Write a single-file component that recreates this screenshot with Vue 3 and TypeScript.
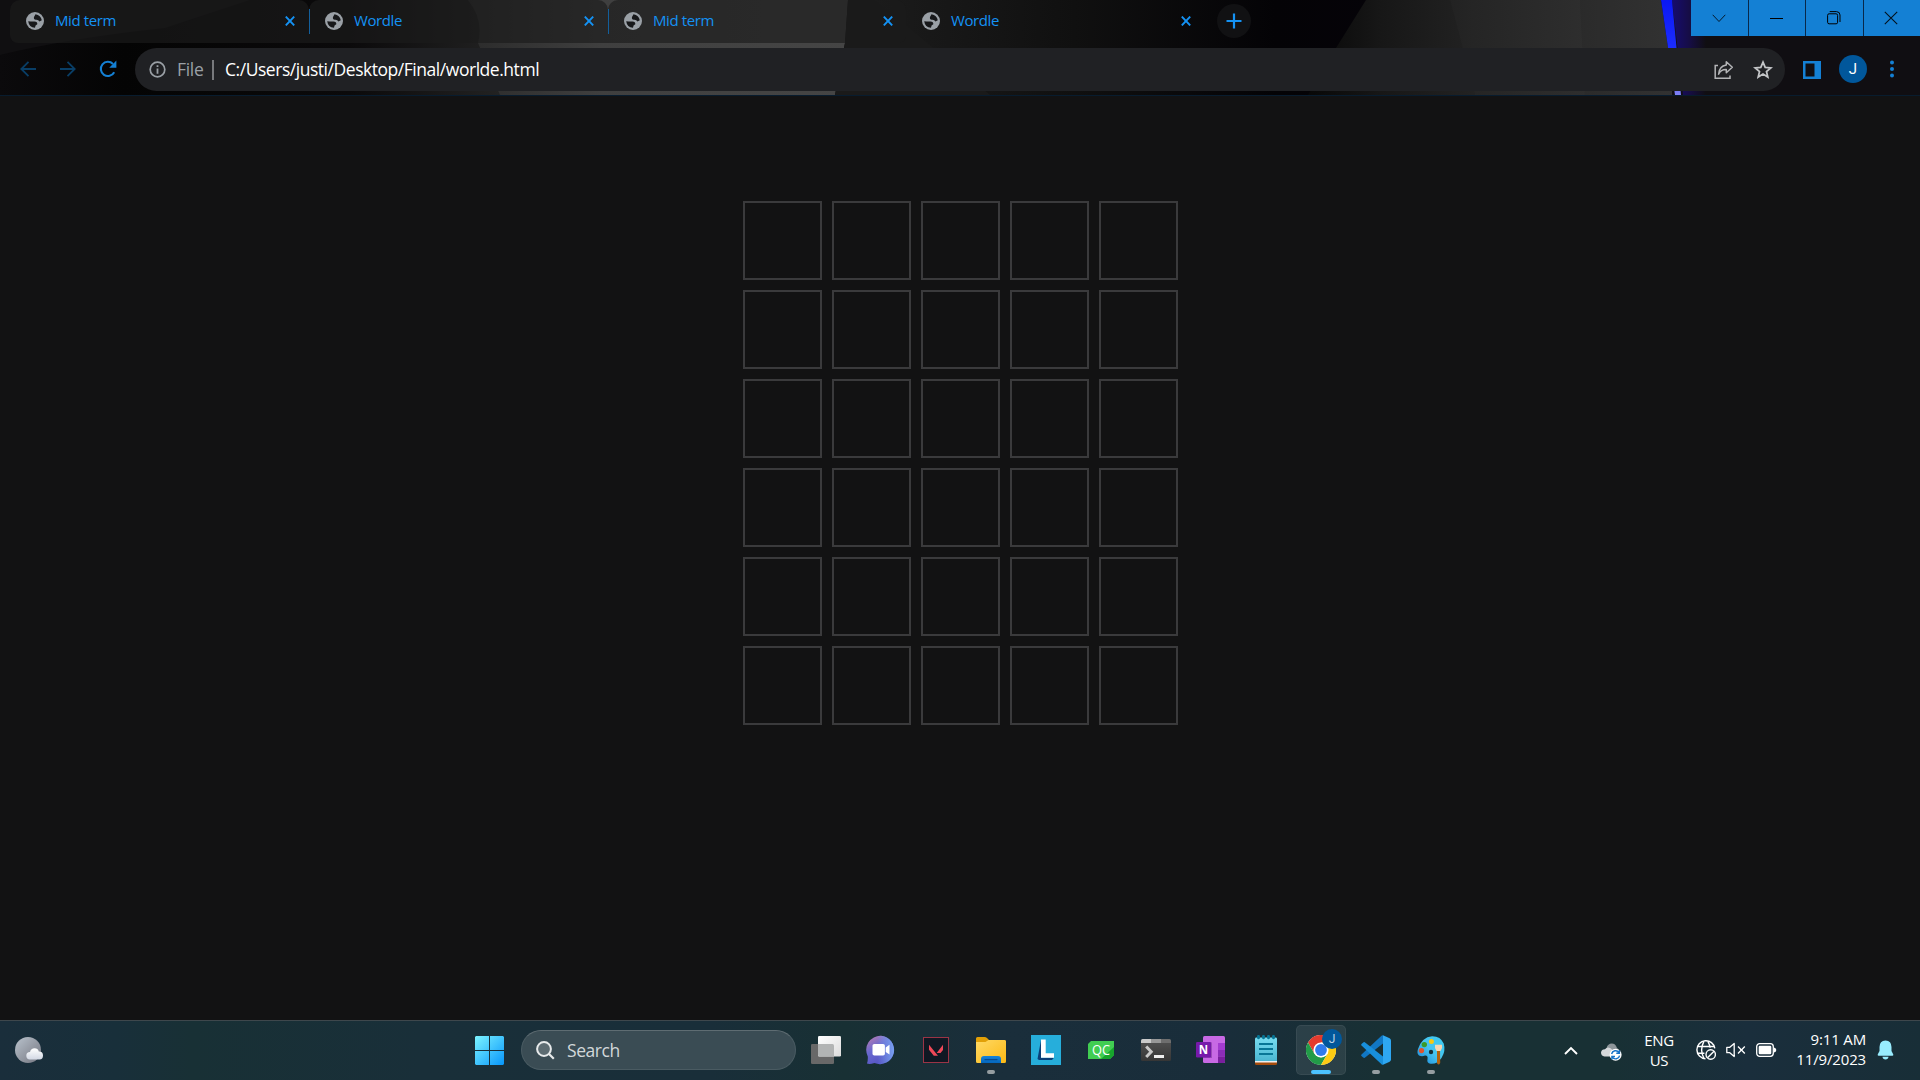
<script setup lang="ts">
interface Tab {
  title: string
  width: number
  active: boolean
  divider: boolean
}

const tabs: Tab[] = [
  { title: 'Mid term', width: 299, active: false, divider: true },
  { title: 'Wordle', width: 299, active: false, divider: true },
  { title: 'Mid term', width: 298, active: false, divider: false },
  { title: 'Wordle', width: 299, active: true, divider: false },
]

const rows = 6
const cols = 5
</script>

<template>
  <div class="screen">
    <header class="browser">
      <svg class="theme" width="1920" height="95" viewBox="0 0 1920 95">
        <defs>
          <linearGradient id="gl" x1="0" x2="1"><stop offset="0" stop-color="#0b0a0c" /><stop offset=".25" stop-color="#040404" /><stop offset=".7" stop-color="#0b0a0b" /><stop offset="1" stop-color="#222" /></linearGradient>
          <linearGradient id="gm" x1="0" x2="1"><stop offset="0" stop-color="#2b2b2b" /><stop offset=".35" stop-color="#3f3f3f" /><stop offset="1" stop-color="#454545" /></linearGradient>
          <linearGradient id="gd" x1="0" x2="1"><stop offset="0" stop-color="#1b1b1b" /><stop offset=".4" stop-color="#101010" /><stop offset=".8" stop-color="#040306" /><stop offset="1" stop-color="#050308" /></linearGradient>
          <linearGradient id="gr" x1="0" x2="1"><stop offset="0" stop-color="#080808" /><stop offset=".2" stop-color="#171717" /><stop offset=".45" stop-color="#222" /><stop offset="1" stop-color="#323232" /></linearGradient>
          <linearGradient id="gb" x1="0" x2="1"><stop offset="0" stop-color="#160c70" /><stop offset=".5" stop-color="#160d46" /><stop offset="1" stop-color="#100e12" /></linearGradient>
          <linearGradient id="gs" x1="0" x2="0" y1="0" y2="1"><stop offset="0" stop-color="#0a18f4" /><stop offset=".5" stop-color="#1c2cff" /><stop offset="1" stop-color="#7f80f4" /></linearGradient>
        </defs>
        <rect width="1920" height="95" fill="#0a090c" />
        <rect width="500" height="95" fill="url(#gl)" />
        <path d="M0 55Q70 38 165 28L250 0H0z" fill="#100f11" />
        <path d="M468 0Q484 20 478 43L500 95H835L845 43L848 0z" fill="url(#gm)" />
        <path d="M848 0L845 43L835 95H1000L880 0z" fill="#1a1a1a" />
        <path d="M875 0L990 95H1375V0z" fill="url(#gd)" />
        <path d="M1366 0L1336 48L1308 95H1675L1661 0z" fill="url(#gr)" />
        <path d="M1450 0L1475 95H1585L1580 0z" fill="#fff" opacity=".015" />
        <rect x="1672" width="248" height="95" fill="#100e12" />
        <path d="M1672 0L1683 95H1706V0z" fill="url(#gb)" />
        <path d="M1661 0H1672L1681 95H1675z" fill="url(#gs)" />
      </svg>

      <div class="tabstrip">
        <div v-for="(tab, i) in tabs" :key="i" class="tab" :class="{ active: tab.active, divider: tab.divider }" :style="{ width: tab.width + 'px' }">
          <svg class="favicon" width="18" height="18" viewBox="0 0 18 18">
            <circle cx="9" cy="9" r="9" fill="#9aa0a6" />
            <path d="M9.5 2.2Q14.8 3 15.8 8.2L13.4 9.4Q12.4 7.4 9.8 7.8Q7.4 7.4 8 5z" fill="#17181a" />
            <path d="M2.2 9.2Q5 9.6 8.5 9.5Q11.6 9.8 11.3 12.3Q9 12.8 9 15.8Q3 15.4 2.2 9.2z" fill="#17181a" />
          </svg>
          <span class="title">{{ tab.title }}</span>
          <svg class="close" width="10" height="10" viewBox="0 0 10 10"><path d="M.8 .6L9.2 9.4M9.2 .6L.8 9.4" stroke="#1492f4" stroke-width="1.9" /></svg>
        </div>
        <div class="newtab">
          <svg width="16" height="16" viewBox="0 0 16 16"><path d="M8 .5V15.5M.5 8H15.5" stroke="#1492f4" stroke-width="2.2" /></svg>
        </div>
      </div>

      <div class="caption">
        <div><svg width="14" height="9" viewBox="0 0 14 9"><path d="M.7 .8L7 7.5L13.3 .8" fill="none" stroke="#06192b" stroke-width="1" /></svg></div>
        <div><svg width="13" height="9" viewBox="0 0 13 9"><path d="M0 4.5H13" stroke="#000" stroke-width="1" /></svg></div>
        <div><svg width="14" height="14" viewBox="0 0 14 14"><rect x=".6" y="2.8" width="10" height="10" rx="1.5" fill="none" stroke="#000" /><path d="M2.7 .6H9.5Q13 .8 13 4V11" fill="none" stroke="#000" /></svg></div>
        <div><svg width="14" height="14" viewBox="0 0 14 14"><path d="M.8 .8L13.2 13.2M13.2 .8L.8 13.2" stroke="#04111d" stroke-width="1.1" /></svg></div>
      </div>

      <div class="toolbar">
        <svg class="nav" width="16" height="16" viewBox="0 0 16 16"><path d="M16 8H1.3M8.5 .8L1.3 8L8.5 15.2" fill="none" stroke="#093e66" stroke-width="1.8" /></svg>
        <svg class="nav fwd" width="16" height="16" viewBox="0 0 16 16"><path d="M0 8H14.7M7.5 .8L14.7 8L7.5 15.2" fill="none" stroke="#093e66" stroke-width="1.8" /></svg>
        <svg class="nav reload" width="18" height="18" viewBox="0 0 18 18"><path d="M15.2 12.2A7.1 7.1 0 1 1 14 3.9" fill="none" stroke="#1480d4" stroke-width="2.1" /><path d="M17.4 .6V7.8H10.2z" fill="#1480d4" /></svg>
        <div class="omnibox">
          <svg class="info" width="17" height="17" viewBox="0 0 17 17"><circle cx="8.5" cy="8.5" r="7.3" fill="none" stroke="#9aa0a6" stroke-width="1.7" /><path d="M8.5 7.4V12.7M8.5 4.2V6" stroke="#9aa0a6" stroke-width="1.8" /></svg>
          <span class="scheme">File</span>
          <i class="bar" />
          <span class="url">C:/Users/justi/Desktop/Final/worlde.html</span>
          <svg class="share" width="20" height="20" viewBox="0 0 20 20"><path d="M4 5.5H1.2V18.2H16V15.5" fill="none" stroke="#b4b5b7" stroke-width="1.5" /><path d="M12.3 1.7L18.3 7.2L12.3 12.7V9.6Q7 9.4 4.6 14.2Q5 6 12.3 4.9z" fill="none" stroke="#b4b5b7" stroke-width="1.5" stroke-linejoin="round" /></svg>
          <svg class="star" width="20" height="20" viewBox="0 0 20 20"><path d="M10 2.2L12.2 7.4L17.8 7.9L13.5 11.6L14.8 17L10 14.1L5.2 17L6.5 11.6L2.2 7.9L7.8 7.4z" fill="none" stroke="#c3c5c7" stroke-width="1.8" /></svg>
        </div>
        <svg class="panel" width="18" height="18" viewBox="0 0 18 18"><path d="M0 0H18V18H0zM2.5 2.5V15.5H11.5V2.5z" fill="#1480d4" fill-rule="evenodd" /></svg>
        <div class="avatar">J</div>
        <svg class="dots" width="4" height="18" viewBox="0 0 4 18"><g fill="#1480d4"><circle cx="2" cy="2.4" r="2" /><circle cx="2" cy="8.9" r="2" /><circle cx="2" cy="15.4" r="2" /></g></svg>
      </div>
    </header>

    <main class="page">
      <div class="board">
        <template v-for="r in rows" :key="r">
          <div v-for="c in cols" :key="c" class="tile" />
        </template>
      </div>
    </main>

    <footer class="taskbar">
      <svg class="weather" width="30" height="30" viewBox="0 0 30 30">
        <defs>
          <linearGradient id="w1" x1="0" x2="1" y1="0" y2="1"><stop offset="0" stop-color="#b9c2cc" /><stop offset="1" stop-color="#747680" /></linearGradient>
          <linearGradient id="w2" x1="0" x2="0" y1="0" y2="1"><stop offset="0" stop-color="#fff" /><stop offset="1" stop-color="#d3d8e4" /></linearGradient>
        </defs>
        <circle cx="14" cy="15" r="13" fill="url(#w1)" />
        <path d="M16 24.4A3.7 3.7 0 0 1 16 17Q17 13.3 20.5 13.3Q24 13.3 24.8 16.4Q29 16.2 29 20.4Q29 24.4 25.5 24.4z" fill="url(#w2)" />
      </svg>

      <div class="center">
        <svg class="start" width="29" height="29" viewBox="0 0 29 29">
          <defs><linearGradient id="st" gradientUnits="userSpaceOnUse" x1="0" y1="0" x2="29" y2="29"><stop offset="0" stop-color="#7cf3ff" /><stop offset="1" stop-color="#0796fb" /></linearGradient></defs>
          <path d="M1 0H14V14H0V1zM15 0H28L29 1V14H15zM0 15H14V29H1L0 28zM15 15H29V28L28 29H15z" fill="url(#st)" />
        </svg>
        <div class="search">
          <svg width="19" height="19" viewBox="0 0 19 19"><circle cx="8" cy="8" r="6.9" fill="#5d6c72" stroke="#e7eaeb" stroke-width="2" /><path d="M13 13L17.8 17.8" stroke="#e7eaeb" stroke-width="2.2" /></svg>
          <span>Search</span>
        </div>

        <div class="app">
          <svg width="30" height="30" viewBox="0 0 30 30">
            <defs><linearGradient id="tv" x1="0" x2="1" y1="0" y2="1"><stop offset="0" stop-color="#fff" /><stop offset="1" stop-color="#dcdcdc" /></linearGradient></defs>
            <rect x="0" y="9" width="23" height="20" rx="1.3" fill="#686868" /><rect x="7" y="1" width="23" height="20.5" rx="1.3" fill="url(#tv)" /><path d="M7 9H21.5Q23 9 23 10.5V21.5H8.3Q7 21.4 7 20z" fill="#b2b4b4" />
          </svg>
        </div>
        <div class="app">
          <svg width="30" height="30" viewBox="0 0 30 30">
            <defs><linearGradient id="ch" x1="0" x2=".5" y1=".2" y2="1"><stop offset="0" stop-color="#a878b8" /><stop offset=".4" stop-color="#6968cf" /><stop offset="1" stop-color="#5554c4" /></linearGradient><linearGradient id="ch2"><stop offset=".4" stop-color="#78a0f0" stop-opacity="0" /><stop offset="1" stop-color="#78a0f0" /></linearGradient></defs>
            <path d="M15 .8A14.2 14.2 0 1 1 8.5 28.1Q3.5 29.6 1 28.6Q2 26.5 1.8 21.5A14.2 14.2 0 0 1 15 .8z" fill="url(#ch)" /><path d="M15 .8A14.2 14.2 0 1 1 8.5 28.1Q3.5 29.6 1 28.6Q2 26.5 1.8 21.5A14.2 14.2 0 0 1 15 .8z" fill="url(#ch2)" />
            <rect x="6.5" y="9" width="12.4" height="11.5" rx="1.8" fill="#fff" /><path d="M19.7 12.5L23.5 9.8V19.6L19.7 17z" fill="#fff" />
          </svg>
        </div>
        <div class="app">
          <svg width="30" height="30" viewBox="0 0 30 30"><rect x="2.5" y="2.5" width="25" height="25" fill="#101823" stroke="#9b3446" /><path d="M8 9.8L17 20.7H12.8L8 14.8zM22 9.8V15L19.5 18H15.7z" fill="#f04858" /></svg>
        </div>
        <div class="app">
          <svg width="30" height="30" viewBox="0 0 30 30">
            <defs><linearGradient id="fo" x1="0" x2="1" y1="0" y2="1"><stop offset="0" stop-color="#ffd965" /><stop offset="1" stop-color="#fcb914" /></linearGradient><linearGradient id="fb" x1="0" x2="0" y1="0" y2="1"><stop offset="0" stop-color="#1583da" /><stop offset="1" stop-color="#0466bd" /></linearGradient></defs>
            <path d="M0 3.5Q0 2 1.5 2H8.5Q10 2 11 3L13 5H28Q30 5.2 30 7V12H0z" fill="#e2a007" /><path d="M0 7H9.5L12.5 5H28.5Q30 5 30 6.5V26.5Q30 28 28.5 28H1.5Q0 28 0 26.5z" fill="url(#fo)" /><path d="M5 28V24Q5 21 8 21H22Q25 21 25 24V28z" fill="url(#fb)" /><path d="M9 24.6H21" stroke="#054a91" stroke-width="1.3" stroke-linecap="round" />
          </svg>
          <i class="run" />
        </div>
        <div class="app">
          <svg width="30" height="30" viewBox="0 0 30 30"><rect width="30" height="30" fill="#26aedb" /><path d="M10 5L6.5 24L8 25H21L23 22.7H10z" fill="#0a3f78" /><path d="M10 4.5H14.7V18.3H23V22.8H10z" fill="#fff" /></svg>
        </div>
        <div class="app">
          <svg width="30" height="30" viewBox="0 0 30 30"><path d="M5 6H28V20L24 24H2V9z" fill="#41cd52" /><path d="M28 12V20L24 24H15z" fill="#17a52c" /><text x="15" y="20.2" text-anchor="middle" textLength="18" lengthAdjust="spacingAndGlyphs" font-family="Open Sans, sans-serif" font-weight="500" font-size="14" fill="#fff">QC</text></svg>
        </div>
        <div class="app">
          <svg width="30" height="30" viewBox="0 0 30 30">
            <defs><linearGradient id="te" x1="0" x2="0" y1="0" y2="1"><stop offset="0" stop-color="#4e4e4e" /><stop offset="1" stop-color="#363636" /></linearGradient></defs>
            <path d="M0 8H30V24.5Q30 26 28.5 26H1.5Q0 26 0 24.5z" fill="url(#te)" /><path d="M0 8V5.5Q0 4 1.5 4H10V8z" fill="#cacaca" /><path d="M10 4H20V8H10z" fill="#979797" /><path d="M20 4H28.5Q30 4 30 5.5V8H20z" fill="#6e6e6e" /><path d="M5.2 11.5L10.2 16.8L5.2 22" fill="none" stroke="#c9c9c9" stroke-width="3" /><rect x="13" y="20" width="10" height="3" fill="#eee" />
          </svg>
        </div>
        <div class="app">
          <svg width="30" height="30" viewBox="0 0 30 30"><rect x="7" y="1" width="22" height="27" rx="1.5" fill="#c869e4" /><path d="M22 8H29V15H22z" fill="#a43bd0" /><path d="M22 15H29V21.5H22z" fill="#8c2db8" /><path d="M22 21.5H29V26.5Q29 28 27.5 28H22z" fill="#7a1f9e" /><path d="M7 7H15Q16 7 16 8.5V23H7z" fill="#5a1f78" opacity=".4" /><rect x="0" y="7" width="15" height="15.5" rx="1.2" fill="#7719aa" /><text x="7.5" y="18.8" text-anchor="middle" font-family="Open Sans, sans-serif" font-weight="700" font-size="11.5" fill="#fff">N</text></svg>
        </div>
        <div class="app">
          <svg width="30" height="30" viewBox="0 0 30 30">
            <defs><linearGradient id="np" x1="0" x2="0" y1="0" y2="1"><stop offset="0" stop-color="#78dcf0" /><stop offset="1" stop-color="#4bb7d2" /></linearGradient></defs>
            <path d="M4 24H26V28.5Q26 30 24.5 30H5.5Q4 30 4 28.5z" fill="#a54c0c" /><path d="M4 24H26V27.5H4z" fill="#eee" /><path d="M4 3.8Q4 2.5 5.5 2.5H24.5Q26 2.5 26 3.8V26H4z" fill="url(#np)" /><g fill="#087696"><rect x="6" y="0" width="3" height="4.2" rx="1.4" /><rect x="11" y="0" width="3" height="4.2" rx="1.4" /><rect x="16" y="0" width="3" height="4.2" rx="1.4" /><rect x="21" y="0" width="3" height="4.2" rx="1.4" /></g><path d="M8 9H22M8 14H22M8 19H22" stroke="#087696" stroke-width="2" />
          </svg>
        </div>
        <div class="app current">
          <svg width="30" height="30" viewBox="0 0 30 30">
            <circle cx="15" cy="15" r="15" fill="#fff" />
            <path d="M15 7.5H28A15 15 0 0 0 2 7.5L8.5 18.75L15 7.5z" fill="#e33b2e" />
            <path d="M2 7.5A15 15 0 0 0 15 30L21.5 18.75L15 22.5L8.5 18.75z" fill="#229b48" />
            <path d="M28 7.5A15 15 0 0 1 15 30L21.5 18.75V11.25L15 7.5z" fill="#fdcb13" />
            <circle cx="15" cy="15" r="7.6" fill="#fff" /><circle cx="15" cy="15" r="5.9" fill="#2f7bed" />
          </svg>
          <span class="badge">J</span>
          <i class="run wide" />
        </div>
        <div class="app">
          <svg width="30" height="30" viewBox="0 0 30 30"><path d="M22 .3L28.6 3.3Q30 4 30 5.5V24.5Q30 26 28.6 26.7L22 29.8z" fill="#2ea7f2" /><path d="M22 .3V8.5L3.8 22.8Q3 23.2 2.2 22.6L.5 21Q-.2 20.2 .5 19.4L20.5 .8Q21 .2 22 .3z" fill="#1177c4" /><path d="M22 29.8V21.5L3.8 7.2Q3 6.8 2.2 7.4L.5 9Q-.2 9.8 .5 10.6L20.5 29.2Q21 30 22 29.8z" fill="#188fdb" /></svg>
          <i class="run" />
        </div>
        <div class="app">
          <svg width="30" height="30" viewBox="0 0 30 30">
            <defs><linearGradient id="pa" x1="1" x2="0" y1="0" y2="1"><stop offset="0" stop-color="#3acbf0" /><stop offset=".5" stop-color="#47c4f0" /><stop offset="1" stop-color="#1583d8" /></linearGradient></defs>
            <path d="M16 1.2Q24.5 1 27.7 8.5Q30 16 25.5 23Q21 29.5 14.5 28.8Q10.5 28.3 11.5 24Q12.2 20.2 9 20.5Q6 22 3 20.5Q.5 18.5 2 14Q6 2 16 1.2z" fill="url(#pa)" /><circle cx="15" cy="17" r="2.2" fill="#183039" /><circle cx="8.3" cy="9.6" r="2.7" fill="#3b9a29" /><circle cx="15.4" cy="6.4" r="2.5" fill="#f8c812" /><circle cx="5.5" cy="15.6" r="2.6" fill="#e2532c" />
            <path d="M21 15H24L24.2 28Q22.5 31 21 28z" fill="#b2620e" /><path d="M19 9.8H26V13L24.5 16H20.5L19 13z" fill="#f5d5b2" />
          </svg>
          <i class="run" />
        </div>
      </div>

      <div class="tray">
        <svg class="chev" width="14" height="9" viewBox="0 0 14 9"><path d="M1 8L7 2L13 8" fill="none" stroke="#fff" stroke-width="1.9" /></svg>
        <svg class="cloud" width="21" height="18" viewBox="0 0 21 18">
          <path d="M4 13Q3.5 9 6 8Q4.5 3 9 .8Q14 -.5 16 5Q18.5 6 18 10V13z" fill="#8d9599" /><path d="M3.5 13.5Q0 13 0 9.5Q.5 6.3 4 6.3Q6 3.6 9 5Q12 6.5 11.5 9L10 13.5z" fill="#d5d8da" />
          <circle cx="14.6" cy="11.8" r="6" fill="#fff" /><path d="M10.6 11A4.1 4.1 0 0 1 18 9.5M18.6 12.6A4.1 4.1 0 0 1 11.2 14.1M18.4 7V10.2H15.3M10.9 16.6V13.5H14" fill="none" stroke="#1672c8" stroke-width="1.4" />
        </svg>
        <div class="lang"><span>ENG</span><span>US</span></div>
        <svg class="net" width="20" height="20" viewBox="0 0 20 20">
          <g fill="none" stroke="#fff" stroke-width="1.4"><path d="M9.5 18.7A9 9 0 1 1 18.8 8.4" /><path d="M1.5 6.5H18M1.5 13.3H8.4M7.8 18Q3.5 9.7 7.8 1.6M12 1.6Q13.8 4.8 14.1 7.8" /><circle cx="14.7" cy="14.5" r="4.7" /><path d="M11.5 17.8L18 11.2" /></g>
        </svg>
        <svg class="vol" width="20" height="16" viewBox="0 0 20 16"><path d="M.8 5.3H3.8L8.2 1.4V14.6L3.8 10.7H.8zM12 4.5L18.8 11.5M18.8 4.5L12 11.5" fill="none" stroke="#fff" stroke-width="1.3" stroke-linejoin="round" /></svg>
        <svg class="bat" width="21" height="14" viewBox="0 0 21 14"><rect x=".7" y=".7" width="16.6" height="12.6" rx="3" fill="none" stroke="#fff" stroke-width="1.3" /><rect x="2.7" y="2.8" width="12.6" height="8.4" rx="1.2" fill="#fff" /><path d="M18 4.5Q20.3 5 20.3 7Q20.3 9 18 9.5z" fill="#fff" /></svg>
        <div class="clock"><span>9:11 AM</span><span>11/9/2023</span></div>
        <svg class="bell" width="17" height="20" viewBox="0 0 17 20"><path d="M8.5 .4Q14.5 .8 14.5 7V11L16.3 14.6Q16.5 15.8 15.3 15.8H1.7Q.5 15.8 .7 14.6L2.5 11V7Q2.5 .8 8.5 .4zM5.5 16.8H11.5Q11.2 19.4 8.5 19.4Q5.8 19.4 5.5 16.8z" fill="#98ecfe" /></svg>
      </div>
    </footer>
  </div>
</template>

<style>
body { margin: 0; background: #121213; overflow: hidden; }
</style>

<style scoped>
.screen { width: 1920px; height: 1080px; display: flex; flex-direction: column; font-family: "Open Sans", "Noto Sans", sans-serif; }
svg { display: block; flex: none; }

.browser { position: relative; height: 95px; border-bottom: 1px solid #081c2e; display: flex; flex-direction: column; }
.theme { position: absolute; left: 0; top: 0; }
.tabstrip { position: relative; height: 43px; display: flex; padding-left: 10px; }
.tab { position: relative; box-sizing: border-box; height: 43px; display: flex; align-items: center; padding: 0 14px 1px 16px; background: rgba(27, 27, 27, .66); border-radius: 10px 10px 0 0; }
.tab:first-child { border-bottom-left-radius: 8px; }
.tab:nth-child(3) { border-bottom-right-radius: 8px; padding-right: 13px; }
.tab.active { background: none; }
.tab.divider::after { content: ""; position: absolute; right: -1px; top: 9px; width: 1px; height: 25px; background: #135f9c; z-index: 1; }
.title { margin: -2px 0 0 11px; flex: 1; font-size: 15px; letter-spacing: -.4px; line-height: 20px; color: #1492f4; }
.newtab { width: 34px; height: 34px; margin: 4px 0 0 12px; border-radius: 50%; background: #111113; display: flex; align-items: center; justify-content: center; }
.caption { position: absolute; right: 0; top: 0; width: 229px; height: 36px; display: flex; gap: 1px; background: #08284a; }
.caption div { flex: 1; background: #1480d4; display: flex; align-items: center; justify-content: center; }
.caption div:last-child svg { margin-right: 1px; }

.toolbar { position: relative; height: 52px; display: flex; align-items: center; padding: 1px 0 0 20px; box-sizing: border-box; }
.nav { margin: 0 23px 1px 0; }
.fwd { margin-left: 1px; }
.reload { margin-right: 18px; }
.omnibox { width: 1650px; height: 43px; box-sizing: border-box; border-radius: 22px; background: #202124; display: flex; align-items: center; padding: 0 12px 0 14px; font-size: 17.5px; line-height: 24px; }
.scheme { margin: -2px 0 0 11px; width: 35px; color: #9aa0a6; letter-spacing: -.3px; }
.bar { width: 2px; height: 20px; background: #77797c; }
.url { margin: -2px 0 0 11px; flex: 1; color: #fff; letter-spacing: -.46px; }
.star { margin-left: 19px; }
.panel { margin-left: 18px; }
.avatar { margin: -1px 0 0 18px; width: 28px; height: 28px; border-radius: 50%; background: #01579b; color: #fff; font: 15px/28px Roboto, sans-serif; text-align: center; }
.dots { margin: -1px 0 0 23px; }

.page { flex: 1; background: #121213; display: flex; justify-content: center; padding: 105px 0 0 1px; }
.board { display: grid; grid-template-columns: repeat(5, 79px); grid-auto-rows: 79px; gap: 10px; align-content: start; }
.tile { border: 2px solid #3a3a3c; }

.taskbar { height: 60px; position: relative; box-sizing: border-box; display: flex; align-items: center; box-shadow: inset 0 1px #3e474c; background: linear-gradient(90deg, #1a2e3b 0, #182f3a 6%, #183035 10%, #192f39 22%, #192e39 37%, #183034 44%, #1a2e3b 52%, #192d3a 64%, #183034 72%, #183034 84%, #1a2e3c 91%, #182e37 100%); color: #fff; }
.weather { margin-left: 14px; }
.center { margin-left: 431px; display: flex; align-items: center; }
.start { margin-right: 17px; }
.search { box-sizing: border-box; width: 275px; height: 40px; border-radius: 20px; background: #3a4c54; border: 1px solid #4a5b62; border-top-color: #5e6c72; display: flex; align-items: center; padding-left: 14px; margin-right: 2.5px; font-size: 17.5px; color: #d2d8da; letter-spacing: -.45px; }
.search span { margin-left: 12px; }
.app { position: relative; width: 55px; height: 60px; display: flex; align-items: center; justify-content: center; }
.app svg { position: relative; }
.app.current::before { content: ""; position: absolute; box-sizing: border-box; left: 2.5px; top: 5px; width: 50px; height: 50px; border-radius: 5px; background: rgba(255, 255, 255, .085); border: 1px solid rgba(255, 255, 255, .06); }
.run { position: absolute; left: 23.5px; bottom: 6px; width: 8px; height: 4px; border-radius: 2px; background: #959da1; }
.run.wide { left: 17.5px; width: 20px; background: #4cc2ff; }
.badge { position: absolute; left: 28.5px; top: 9px; width: 20px; height: 20px; border-radius: 50%; background: #01579b; color: #b9d2e6; font: 12px/20px Roboto, sans-serif; text-align: center; }

.tray { flex: 1; display: flex; align-items: center; font-size: 15px; line-height: 20px; }
.chev { margin-left: 105.5px; }
.cloud { margin: 3px 0 0 23px; }
.lang { margin-left: 18px; width: 38px; display: flex; flex-direction: column; align-items: center; letter-spacing: -.3px; }
.net { margin-left: 18px; }
.vol { margin-left: 10px; }
.bat { margin-left: 10px; }
.clock { margin: -2px 0 0 8px; width: 81px; display: flex; flex-direction: column; align-items: flex-end; letter-spacing: -.15px; }
.bell { margin-left: 11px; }
</style>
